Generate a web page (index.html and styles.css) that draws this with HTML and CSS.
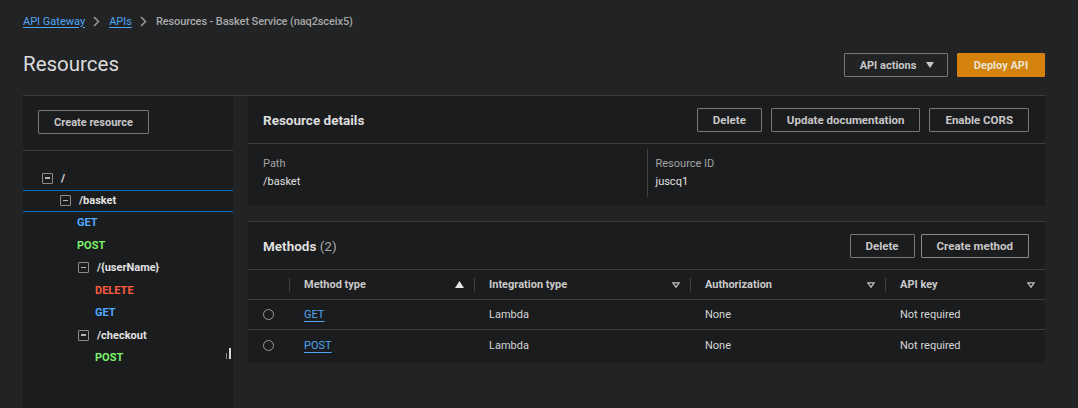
FILE: index.html
```html
<!DOCTYPE html>
<html lang="en">
<head>
<meta charset="utf-8">
<title>Resources - Basket Service</title>
<link rel="stylesheet" href="styles.css">
</head>
<body>
<div class="page">
  <nav class="breadcrumb">
    <a class="crumb-link" href="#">API Gateway</a>
    <span class="chev"><svg width="7" height="11" viewBox="0 0 7 11"><path d="M1 1l4.5 4.5L1 10" fill="none" stroke="#9a9a9a" stroke-width="1.5"/></svg></span>
    <a class="crumb-link" href="#">APIs</a>
    <span class="chev"><svg width="7" height="11" viewBox="0 0 7 11"><path d="M1 1l4.5 4.5L1 10" fill="none" stroke="#9a9a9a" stroke-width="1.5"/></svg></span>
    <span class="crumb-current">Resources - Basket Service (naq2sceix5)</span>
  </nav>

  <header class="page-header">
    <h1 class="title">Resources</h1>
    <div class="header-actions">
      <button class="btn btn-dropdown">API actions <svg class="caret" width="8" height="6" viewBox="0 0 8 6"><path d="M0 0h8L4 6z" fill="#c9c9c9"/></svg></button>
      <button class="btn btn-primary">Deploy API</button>
    </div>
  </header>

  <div class="layout">
    <aside class="sidebar">
      <div class="sidebar-top">
        <button class="btn btn-create">Create resource</button>
      </div>
      <ul class="tree">
        <li class="tree-row lvl0"><span class="toggle"></span><span class="res">/</span></li>
        <li class="tree-row lvl1 selected"><span class="toggle"></span><span class="res">/basket</span></li>
        <li class="tree-row m1"><span class="method get">GET</span></li>
        <li class="tree-row m1"><span class="method post">POST</span></li>
        <li class="tree-row lvl2"><span class="toggle"></span><span class="res">/{userName}</span></li>
        <li class="tree-row m2"><span class="method delete">DELETE</span></li>
        <li class="tree-row m2"><span class="method get">GET</span></li>
        <li class="tree-row lvl2"><span class="toggle"></span><span class="res">/checkout</span></li>
        <li class="tree-row m2"><span class="method post">POST</span></li>
      </ul>
      <div class="resize-handle"><span class="rh-a"></span><span class="rh-b"></span></div>
    </aside>

    <main class="main">
      <section class="panel">
        <div class="panel-header">
          <h2 class="panel-title">Resource details</h2>
          <div class="panel-actions">
            <button class="btn">Delete</button>
            <button class="btn">Update documentation</button>
            <button class="btn">Enable CORS</button>
          </div>
        </div>
        <div class="details">
          <div class="detail">
            <div class="label">Path</div>
            <div class="value">/basket</div>
          </div>
          <div class="detail detail-sep">
            <div class="label">Resource ID</div>
            <div class="value">juscq1</div>
          </div>
        </div>
      </section>

      <section class="panel methods">
        <div class="panel-header">
          <h2 class="panel-title">Methods <span class="count">(2)</span></h2>
          <div class="panel-actions">
            <button class="btn">Delete</button>
            <button class="btn btn-light">Create method</button>
          </div>
        </div>
        <div class="table">
          <div class="tr th-row">
            <div class="th"></div>
            <div class="th sep">Method type <svg class="sort" width="9" height="7" viewBox="0 0 9 7"><path d="M0 7h9L4.5 0z" fill="#e6e6e6"/></svg></div>
            <div class="th sep">Integration type <svg class="filter" width="8" height="6" viewBox="0 0 8 6"><path d="M0.8 0.8h6.4L4 5.2z" fill="none" stroke="#bdbdbd" stroke-width="1.3"/></svg></div>
            <div class="th sep">Authorization <svg class="filter" width="8" height="6" viewBox="0 0 8 6"><path d="M0.8 0.8h6.4L4 5.2z" fill="none" stroke="#bdbdbd" stroke-width="1.3"/></svg></div>
            <div class="th sep">API key <svg class="filter" width="8" height="6" viewBox="0 0 8 6"><path d="M0.8 0.8h6.4L4 5.2z" fill="none" stroke="#bdbdbd" stroke-width="1.3"/></svg></div>
          </div>
          <div class="tr">
            <div class="td"><span class="radio"></span></div>
            <div class="td"><a class="m-link" href="#">GET</a></div>
            <div class="td">Lambda</div>
            <div class="td">None</div>
            <div class="td">Not required</div>
          </div>
          <div class="tr last">
            <div class="td"><span class="radio"></span></div>
            <div class="td"><a class="m-link" href="#">POST</a></div>
            <div class="td">Lambda</div>
            <div class="td">None</div>
            <div class="td">Not required</div>
          </div>
        </div>
      </section>
    </main>
  </div>
</div>
</body>
</html>
```

FILE: styles.css
```css
* { box-sizing: border-box; }

html, body {
  margin: 0;
  padding: 0;
  background: #212325;
  height: 100%;
  overflow: hidden;
}

body {
  font-family: Roboto, "Open Sans", "Liberation Sans", sans-serif;
  font-size: 11px;
  color: #d4d4d4;
}

.page {
  padding: 0 33px 0 23px;
}

/* breadcrumb */
.breadcrumb {
  display: flex;
  align-items: center;
  height: 42px;
  gap: 8px;
}
.crumb-link {
  color: #4fa6f2;
  text-decoration: underline;
  text-underline-offset: 2px;
}
.chev { display: flex; align-items: center; margin: 0 1px 0 0; }
.crumb-current { color: #a9a9a9; font-weight: 500; letter-spacing: -0.1px; }

/* header */
.page-header {
  display: flex;
  justify-content: space-between;
  align-items: center;
  height: 44px;
  margin-bottom: 9px;
}
.title {
  margin: 0;
  font-size: 20.5px;
  font-weight: 400;
  color: #dcdcdc;
}
.header-actions { display: flex; gap: 9px; padding-top: 2px; }

.btn {
  font-family: inherit;
  font-size: 11.5px;
  font-weight: 700;
  color: #c7c7c7;
  background: transparent;
  border: 1px solid #7a7670;
  border-radius: 1px;
  height: 24px;
  padding: 0 15px;
  display: inline-flex;
  align-items: center;
  justify-content: center;
  gap: 10px;
  white-space: nowrap;
}
.btn-dropdown { width: 104px; font-size: 11px; padding: 0 0 0 2px; }
.caret { flex: none; }
.btn-primary {
  background: #d3820b;
  border-color: #d3820b;
  color: #ebe3d3;
  width: 88px;
  font-size: 11px;
  padding: 0;
}
.btn-light { border-color: #8d877f; }

/* layout */
.layout {
  display: flex;
  gap: 15px;
  border-top: 1px solid #3c3d3f;
  height: 313px;
}

.sidebar {
  width: 210px;
  flex: none;
  background: #1b1c1e;
  position: relative;
}
.sidebar-top {
  padding: 14px 15px 16px;
  border-bottom: 1px solid #3e3f41;
}
.btn-create { width: 111px; padding: 0; font-size: 11px; }

.tree {
  list-style: none;
  margin: 0;
  padding: 16px 0 0;
}
.tree-row {
  height: 22.5px;
  display: flex;
  align-items: center;
  gap: 8px;
  font-weight: 700;
}
.tree-row.lvl0 { padding-left: 19px; }
.tree-row.lvl1 { padding-left: 37px; }
.tree-row.lvl2 { padding-left: 55px; }
.tree-row.m1 { padding-left: 54px; }
.tree-row.m2 { padding-left: 72px; }
.tree-row.selected {
  border-top: 1px solid #0a6bc2;
  border-bottom: 1px solid #0a6bc2;
  height: 22px;
}
.toggle {
  width: 11px;
  height: 11px;
  border: 1.5px solid #8e8b88;
  border-radius: 1px;
  position: relative;
  flex: none;
}
.toggle::after {
  content: "";
  position: absolute;
  left: 2px;
  right: 2px;
  top: 3.5px;
  height: 1.5px;
  background: #b8b5b1;
}
.res { color: #e2e2e2; }
.method.get { color: #4fa8ff; }
.method.post { color: #7cf06c; }
.method.delete { color: #ff5b3f; }

.resize-handle {
  position: absolute;
  left: 203px;
  top: 252px;
  display: flex;
  gap: 2px;
  align-items: flex-end;
}
.rh-a { width: 1px; height: 6px; background: #8c8c8c; }
.rh-b { width: 1.5px; height: 11px; background: #d8d8d8; }

/* main */
.main {
  flex: 1;
  display: flex;
  flex-direction: column;
  gap: 15px;
}
.panel {
  background: #1b1c1e;
}
.panel.methods { border-top: 1px solid #3c3d3f; }
.panel-header {
  display: flex;
  justify-content: space-between;
  align-items: center;
  padding: 0 16px 0 15px;
  height: 48px;
  border-bottom: 1px solid #3e3f41;
}
.panel-title {
  margin: 0;
  font-size: 13.5px;
  font-weight: 700;
  color: #dedede;
}
.count { font-weight: 400; color: #a8a8a8; }
.panel-actions { display: flex; gap: 9px; }
.methods .panel-actions { gap: 6px; }

.details {
  display: grid;
  grid-template-columns: 1fr 1fr;
  padding: 5px 15px 9px;
}
.detail { padding: 6px 0 6px; }
.detail-sep { border-left: 1px solid #3f4042; padding-left: 8px; }
.label { color: #a4a4a4; line-height: 18px; }
.value { color: #e0e0e0; line-height: 18px; }

/* table */
.table { display: flex; flex-direction: column; padding-bottom: 3px; }
.tr {
  display: grid;
  grid-template-columns: 41px 185px 216px 195px 1fr;
  height: 30px;
  align-items: center;
  border-bottom: 1px solid #3a3b3d;
}
.tr.last { border-bottom: none; }
.th {
  font-weight: 700;
  color: #c9c9c9;
  height: 100%;
  display: flex;
  align-items: center;
  padding: 0 10px 0 15px;
  justify-content: space-between;
  position: relative;
}
.th.sep::before {
  content: "";
  position: absolute;
  left: 0;
  top: 8px;
  bottom: 7px;
  width: 1px;
  background: #404143;
}
.td {
  padding-left: 15px;
  color: #d6d6d6;
}
.radio {
  display: block;
  width: 11px;
  height: 11px;
  border: 1.2px solid #9a9a9a;
  border-radius: 50%;
}
.m-link {
  color: #4fa6f2;
  text-decoration: underline;
  text-underline-offset: 3px;
}
```
